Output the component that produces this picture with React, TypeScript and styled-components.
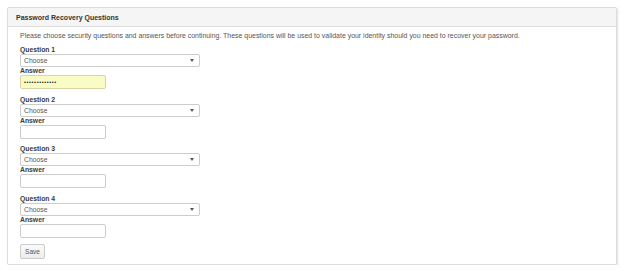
import styled, { createGlobalStyle } from 'styled-components'

const GlobalStyle = createGlobalStyle`
    body {
        margin: 0;
        background: #ffffff;
        font-family: "Liberation Sans", Arial, sans-serif;
        color: #333333;
    }
`

const Panel = styled.div`
    margin: 7px 0 0 7px;
    width: 608px;
    border: 1px solid #dddddd;
    border-radius: 2px;
    background: #ffffff;
    box-shadow: 1px 1px 2px rgba(0, 0, 0, 0.12);
`

const Heading = styled.div`
    height: 18px;
    display: flex;
    align-items: center;
    padding-left: 8px;
    background: #f5f5f5;
    border-bottom: 1px solid #dddddd;
    font-size: 7px;
    font-weight: bold;
    color: #333333;
`

const Body = styled.div`
    padding: 4px 12px 5px 12px;
    display: flex;
    flex-direction: column;
    align-items: flex-start;
`

const Intro = styled.p`
    margin: 0 0 6px 0;
    font-size: 6.95px;
    line-height: 9px;
    color: #555555;
`

const Block = styled.div`
    display: flex;
    flex-direction: column;
    align-items: flex-start;
    margin-bottom: 6.5px;
`

const Label = styled.label`
    font-size: 6.8px;
    font-weight: bold;
    line-height: 8px;
    height: 8px;
    color: #3a3a3a;
`

const Select = styled.div`
    box-sizing: border-box;
    width: 180px;
    height: 13px;
    padding: 0 5px 0 3px;
    display: flex;
    align-items: center;
    justify-content: space-between;
    border: 1px solid #cccccc;
    border-radius: 2px;
    background: #ffffff;
    font-size: 6.8px;
    color: #555555;
`

const Caret = styled.span`
    width: 0;
    height: 0;
    border-left: 2px solid transparent;
    border-right: 2px solid transparent;
    border-top: 3px solid #555555;
`

const Input = styled.div<{ $filled?: boolean }>`
    box-sizing: border-box;
    width: 86px;
    height: 14px;
    padding: 0 3px;
    display: flex;
    align-items: center;
    border: 1px solid ${p => (p.$filled ? '#d8d6a8' : '#cccccc')};
    border-radius: 2px;
    background: ${p => (p.$filled ? '#fafcc6' : '#ffffff')};
    font-size: 5.5px;
    letter-spacing: 0.6px;
    color: #222222;
`

const Button = styled.button`
    box-sizing: border-box;
    height: 15px;
    width: 25px;
    padding: 0;
    border: 1px solid #cccccc;
    border-radius: 2px;
    background: linear-gradient(#fafafa, #ececec);
    font-family: "Liberation Sans", Arial, sans-serif;
    font-size: 6.5px;
    color: #555555;
`

const questions = [1, 2, 3, 4]

export default function App() {
    return (
        <>
            <GlobalStyle />
            <Panel>
                <Heading>Password Recovery Questions</Heading>
                <Body>
                    <Intro>
                        Please choose security questions and answers before continuing. These questions will be used to validate your identity should you need to recover your password.
                    </Intro>
                    {questions.map(n => (
                        <Block key={n}>
                            <Label>Question {n}</Label>
                            <Select>
                                <span>Choose</span>
                                <Caret />
                            </Select>
                            <Label>Answer</Label>
                            <Input $filled={n === 1}>{n === 1 ? '•••••••••••••' : ''}</Input>
                        </Block>
                    ))}
                    <Button>Save</Button>
                </Body>
            </Panel>
        </>
    )
}
